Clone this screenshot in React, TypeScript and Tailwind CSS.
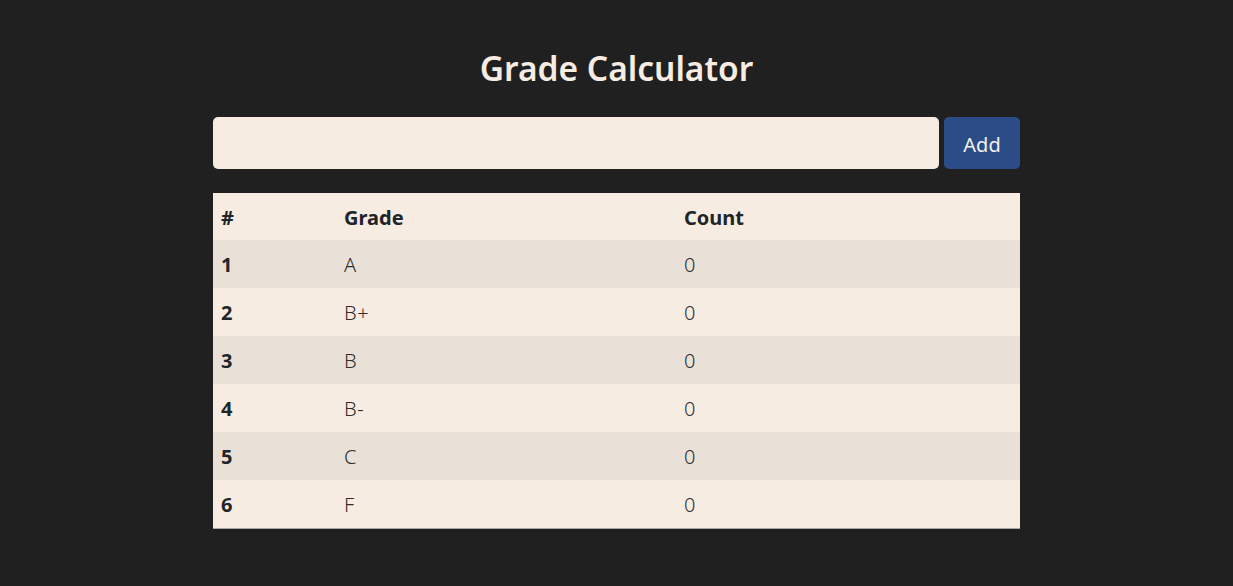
import { useState } from "react";

const grades = ["A", "B+", "B", "B-", "C", "F"];

export default function App() {
    const [value, setValue] = useState("");

    return (
        <div className="min-h-screen bg-[#1f201f] font-['Noto_Sans',sans-serif] pt-[46px]">
            <div className="w-[807px] mx-auto">
                <h1 className="text-center text-[33.5px] leading-[44px] font-semibold text-[#f7ece2]">Grade Calculator</h1>

                <div className="flex gap-[5px] mt-[27px]">
                    <input
                        value={value}
                        onChange={(e) => setValue(e.target.value)}
                        className="flex-1 h-[52px] rounded-[5px] bg-[#f7ece2] px-3 text-xl outline-none"
                    />
                    <button className="w-[76px] h-[52px] pt-[3px] rounded-[5px] bg-[#2b4c87] text-[#f2f0ee] text-[20px]">Add</button>
                </div>

                <table className="w-full mt-[24px] bg-[#f7ece2] text-[20px] text-[#212529] border-b border-[#a9a6a2]">
                    <thead>
                        <tr className="h-[47px]">
                            <th className="text-left font-bold px-2 pt-[2px] w-[123px]">#</th>
                            <th className="text-left font-bold px-2 pt-[2px] w-[340px]">Grade</th>
                            <th className="text-left font-bold px-2 pt-[2px]">Count</th>
                        </tr>
                    </thead>
                    <tbody>
                        {grades.map((g, i) => (
                            <tr key={g} className={`h-[48px] ${i % 2 === 0 ? "bg-[#e9e1d7]" : ""}`}>
                                <td className="px-2 pt-[2px] font-bold">{i + 1}</td>
                                <td className="px-2 pt-[2px] font-light tracking-[0.5px] text-[#2e2e2e]">{g}</td>
                                <td className="px-2 pt-[2px] font-light text-[#2e2e2e]">0</td>
                            </tr>
                        ))}
                    </tbody>
                </table>
            </div>
        </div>
    );
}
